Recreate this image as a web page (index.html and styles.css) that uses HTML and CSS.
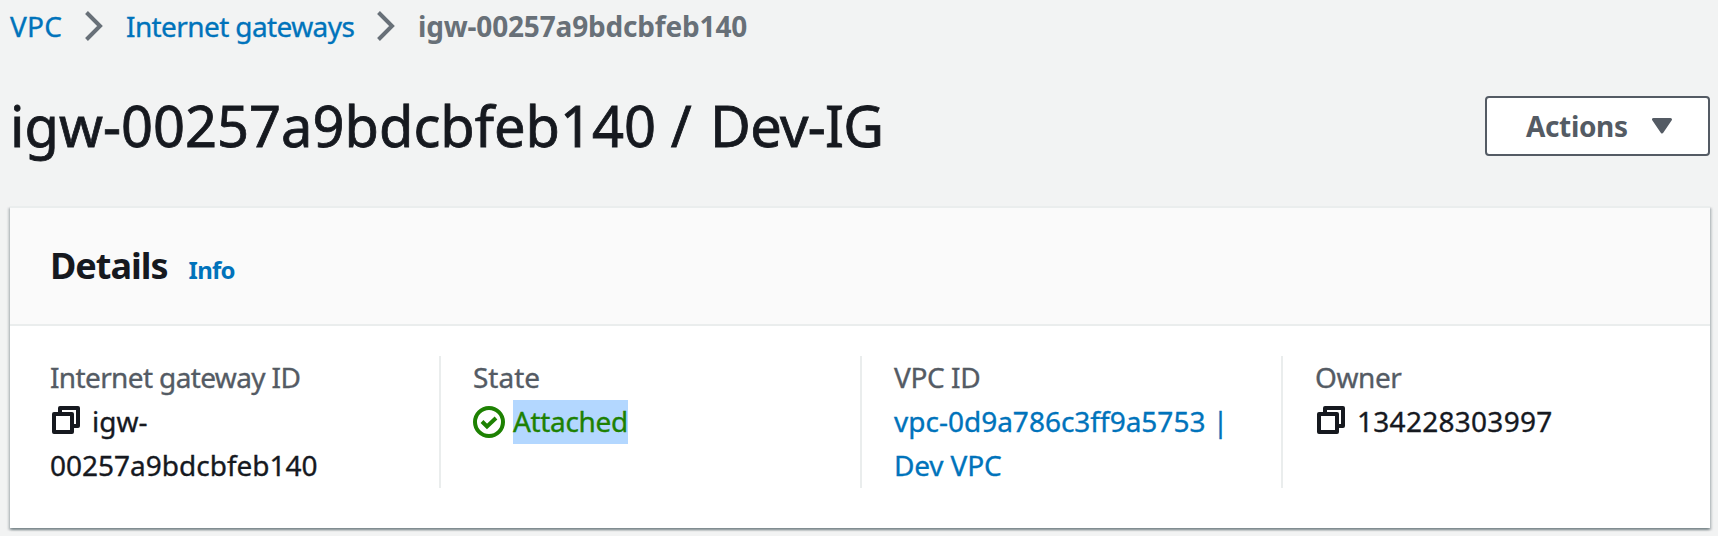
FILE: index.html
```html
<!DOCTYPE html>
<html lang="en">
<head>
<meta charset="utf-8">
<title>Internet gateway details</title>
<link rel="stylesheet" href="styles.css">
</head>
<body>
<nav class="breadcrumbs">
  <a class="crumb crumb-root" href="#">VPC</a>
  <svg class="chevron" width="18" height="30" viewBox="0 0 18 30"><path d="M1.5 1.5 15 15 1.5 28.5"/></svg>
  <a class="crumb crumb-list" href="#">Internet gateways</a>
  <svg class="chevron" width="18" height="30" viewBox="0 0 18 30"><path d="M1.5 1.5 15 15 1.5 28.5"/></svg>
  <span class="crumb crumb-current">igw-00257a9bdcbfeb140</span>
</nav>
<header class="page-header">
  <h1 class="title">igw-00257a9bdcbfeb140 / <span class="title-name">Dev-IG</span></h1>
  <button class="actions"><span class="actions-label">Actions</span><svg width="20" height="16" viewBox="0 0 20 16"><path d="M1.5 1.5H18.5L10 14Z" fill="#545b64" stroke="#545b64" stroke-width="3" stroke-linejoin="round"/></svg></button>
</header>
<section class="card">
  <div class="card-header">
    <h2 class="card-title">Details</h2>
    <a class="info" href="#">Info</a>
  </div>
  <div class="columns">
    <div class="column">
      <div class="label label-gateway">Internet gateway ID</div>
      <div class="value"><svg class="copy" width="28" height="28" viewBox="0 0 28 28"><path d="M8 6V2H26V20H22M2 8H20V26H2Z"/></svg><span class="gateway-prefix">igw-</span><br><span class="gateway-id">00257a9bdcbfeb140</span></div>
    </div>
    <div class="column">
      <div class="label label-state">State</div>
      <div class="value state"><svg class="check" width="32" height="32" viewBox="0 0 32 32"><circle cx="16" cy="16" r="14"/><path d="M9 15.5 14 20.5 23 12"/></svg><span class="selected">Attached</span></div>
    </div>
    <div class="column">
      <div class="label label-vpc">VPC ID</div>
      <div class="value"><a class="vpc-link" href="#"><span class="vpc-id">vpc-0d9a786c3ff9a5753 |</span><br><span class="vpc-name">Dev VPC</span></a></div>
    </div>
    <div class="column">
      <div class="label label-owner">Owner</div>
      <div class="value"><svg class="copy" width="28" height="28" viewBox="0 0 28 28"><path d="M8 6V2H26V20H22M2 8H20V26H2Z"/></svg><span class="owner-id">134228303997</span></div>
    </div>
  </div>
</section>
</body>
</html>
```
FILE: styles.css
```css
* { box-sizing: border-box; }
body {
  margin: 0;
  height: 536px;
  overflow: hidden;
  background: #f2f3f3;
  color: #16191f;
  font: 28px/44px "Noto Sans", sans-serif;
  -webkit-text-stroke-width: .35px;
}
a { color: #0073bb; text-decoration: none; }
svg { flex: none; }
.breadcrumbs {
  display: flex;
  align-items: center;
  height: 52px;
  padding: 0 0 0 10px;
  white-space: nowrap;
}
.crumb-root { width: 75px; letter-spacing: .2px; }
.crumb-list { width: 232px; margin-left: 23px; letter-spacing: -.6px; }
.crumb-current { margin-left: 23px; font-weight: 700; color: #687078; letter-spacing: -.17px; -webkit-text-stroke-width: 0; }
.crumb-list + .chevron { margin-left: 19px; }
.chevron { fill: none; stroke: #687078; stroke-width: 4; }
.page-header {
  display: flex;
  align-items: flex-start;
  justify-content: space-between;
  height: 154px;
  padding: 44px 8px 0 10px;
}
.title {
  margin: -13px 0 0;
  font-size: 56px;
  font-weight: 400;
  line-height: 84px;
  white-space: nowrap;
  -webkit-text-stroke-width: .8px;
}
.title-name { margin-left: 4px; letter-spacing: -.75px; }
.actions {
  display: flex;
  align-items: center;
  justify-content: space-between;
  width: 225px;
  height: 60px;
  padding: 0 36px 0 39px;
  border: 2px solid #545b64;
  border-radius: 4px;
  background: #fff;
  color: #545b64;
  font: 700 28px/44px "Noto Sans", sans-serif;
  letter-spacing: -.35px;
  -webkit-text-stroke-width: 0;
}
.card {
  height: 322px;
  margin: 0 8px 0 10px;
  border-top: 2px solid #eaeded;
  background: #fff;
  box-shadow: 0 2px 2px rgba(0, 28, 36, .3), 2px 2px 2px rgba(0, 28, 36, .15), -2px 2px 2px rgba(0, 28, 36, .15);
}
.card-header {
  display: flex;
  align-items: baseline;
  gap: 21px;
  height: 118px;
  padding: 34px 40px 0;
  border-bottom: 2px solid #eaeded;
  background: #fafafa;
  -webkit-text-stroke-width: 0;
}
.card-title { margin: 0; font-size: 36px; line-height: 48px; letter-spacing: -1px; }
.info { font-size: 24px; line-height: 36px; font-weight: 700; letter-spacing: -.8px; }
.columns {
  display: grid;
  grid-template-columns: repeat(4, 421px);
  padding: 30px 8px 0;
}
.column { height: 132px; white-space: nowrap; }
.column:first-child { padding-left: 32px; }
.column + .column { border-left: 2px solid #eaeded; padding-left: 32px; }
.label { margin-top: -1px; color: #545b64; }
.label-gateway { letter-spacing: -.63px; }
.label-vpc, .label-owner { letter-spacing: -.4px; }
.value { height: 88px; }
.copy { margin: 0 12px 0 2px; vertical-align: -2px; fill: none; stroke: #16191f; stroke-width: 4; stroke-linejoin: round; }
.state { display: flex; align-items: center; gap: 8px; height: 44px; margin-top: 1px; color: #1d8102; }
.check { fill: none; stroke: #1d8102; stroke-width: 4; }
.selected { height: 44px; line-height: 42px; background: #b3d7ff; letter-spacing: -.35px; }
.vpc-name { letter-spacing: -.15px; }
.owner-id { letter-spacing: .28px; }
```
